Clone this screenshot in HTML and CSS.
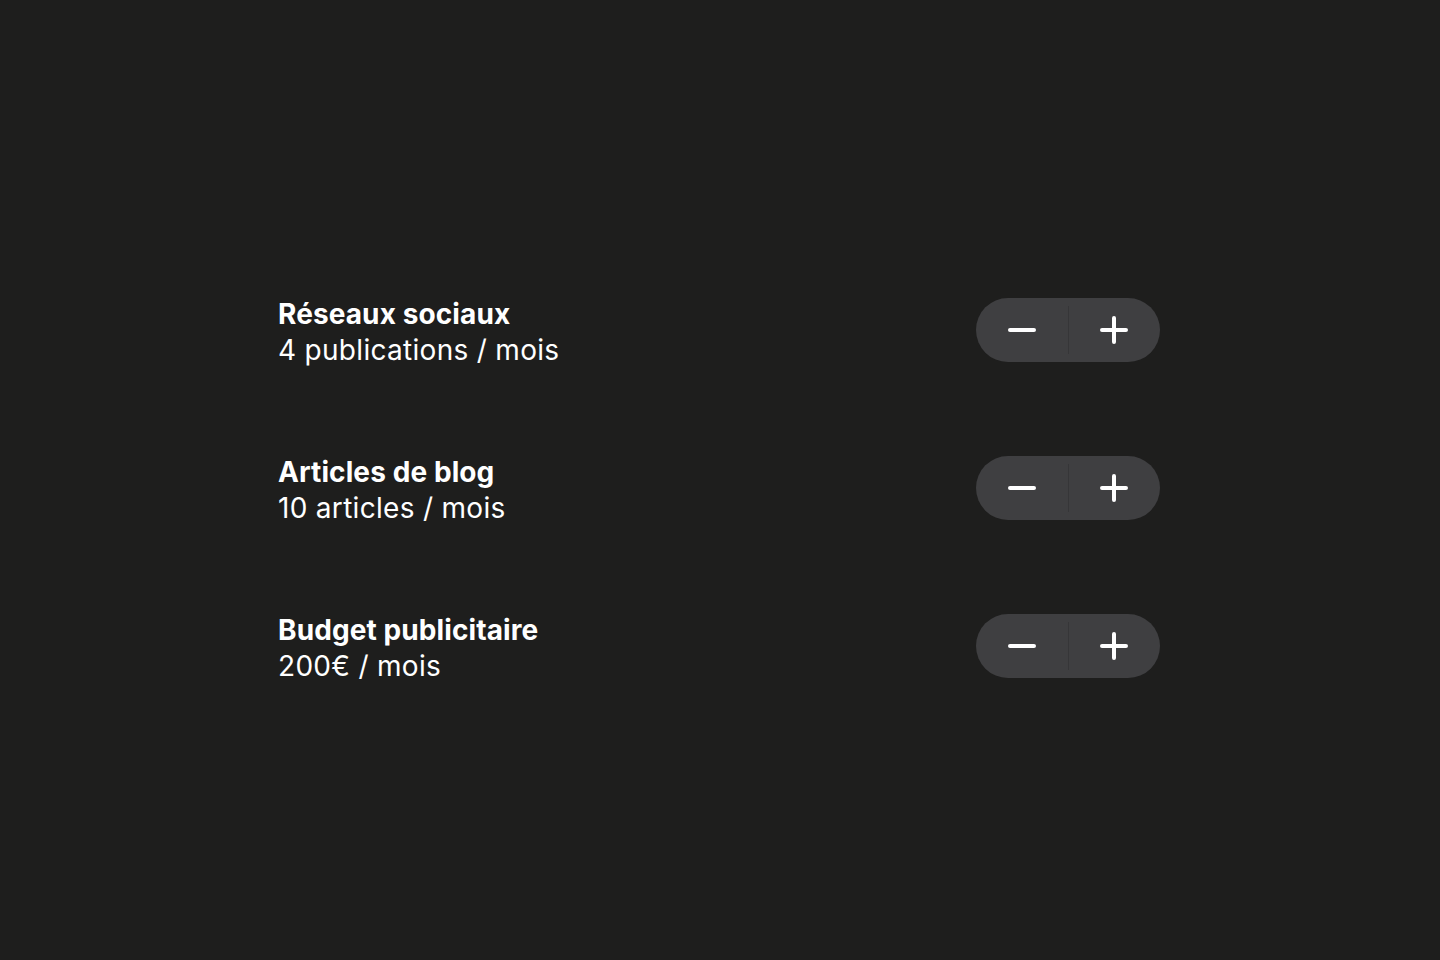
FILE: index.html
```html
<!DOCTYPE html>
<html lang="fr">
<head>
  <meta charset="UTF-8">
  <meta name="viewport" content="width=device-width, initial-scale=1">
  <title>Options</title>
  <link rel="stylesheet" href="styles.css">
</head>
<body>

  <div class="options">
    <!-- Réseaux sociaux -->
    <div class="option">
      <div class="info">
        <div class="titre">Réseaux sociaux</div>
        <div class="valeur">4 publications / mois</div>
      </div>
      <div class="stepper">
        <button class="step" aria-label="Moins">
          <svg width="28" height="28" viewBox="0 0 28 28"><path d="M2 14h24" stroke="#fff" stroke-width="4" stroke-linecap="round"/></svg>
        </button>
        <span class="sep"></span>
        <button class="step" aria-label="Plus">
          <svg width="28" height="28" viewBox="0 0 28 28"><path d="M2 14h24M14 2v24" stroke="#fff" stroke-width="4" stroke-linecap="round"/></svg>
        </button>
      </div>
    </div>

    <!-- Articles de blog -->
    <div class="option">
      <div class="info">
        <div class="titre">Articles de blog</div>
        <div class="valeur">10 articles / mois</div>
      </div>
      <div class="stepper">
        <button class="step" aria-label="Moins">
          <svg width="28" height="28" viewBox="0 0 28 28"><path d="M2 14h24" stroke="#fff" stroke-width="4" stroke-linecap="round"/></svg>
        </button>
        <span class="sep"></span>
        <button class="step" aria-label="Plus">
          <svg width="28" height="28" viewBox="0 0 28 28"><path d="M2 14h24M14 2v24" stroke="#fff" stroke-width="4" stroke-linecap="round"/></svg>
        </button>
      </div>
    </div>

    <!-- Budget publicitaire -->
    <div class="option">
      <div class="info">
        <div class="titre">Budget publicitaire</div>
        <div class="valeur">200€ / mois</div>
      </div>
      <div class="stepper">
        <button class="step" aria-label="Moins">
          <svg width="28" height="28" viewBox="0 0 28 28"><path d="M2 14h24" stroke="#fff" stroke-width="4" stroke-linecap="round"/></svg>
        </button>
        <span class="sep"></span>
        <button class="step" aria-label="Plus">
          <svg width="28" height="28" viewBox="0 0 28 28"><path d="M2 14h24M14 2v24" stroke="#fff" stroke-width="4" stroke-linecap="round"/></svg>
        </button>
      </div>
    </div>
  </div>

</body>
</html>
```

FILE: styles.css
```css
body {
  margin: 0;
  font-family: Inter, "Noto Sans", sans-serif;
  background-color: #1e1e1d;
  color: #fff;
}

.options {
  width: 882px;
  margin: 0 auto;
  padding: 294px 2px 0 0;
  display: flex;
  flex-direction: column;
  gap: 86px;
}

.option {
  display: flex;
  align-items: center;
  justify-content: space-between;
  height: 72px;
}

.info {
  margin-top: 4px;
}

.titre {
  font-size: 28px;
  line-height: 36px;
  font-weight: 700;
  letter-spacing: 0.1px;
}

.valeur {
  font-size: 28px;
  line-height: 36px;
  font-weight: 400;
  letter-spacing: 0.3px;
}

.stepper {
  display: flex;
  align-items: center;
  width: 184px;
  height: 64px;
  background-color: #3f3f41;
  border-radius: 32px;
}

.step {
  flex: 1;
  height: 100%;
  display: flex;
  align-items: center;
  justify-content: center;
  background: none;
  border: none;
  padding: 0;
  cursor: pointer;
}

.sep {
  width: 1px;
  height: 48px;
  background-color: #363638;
}
```
